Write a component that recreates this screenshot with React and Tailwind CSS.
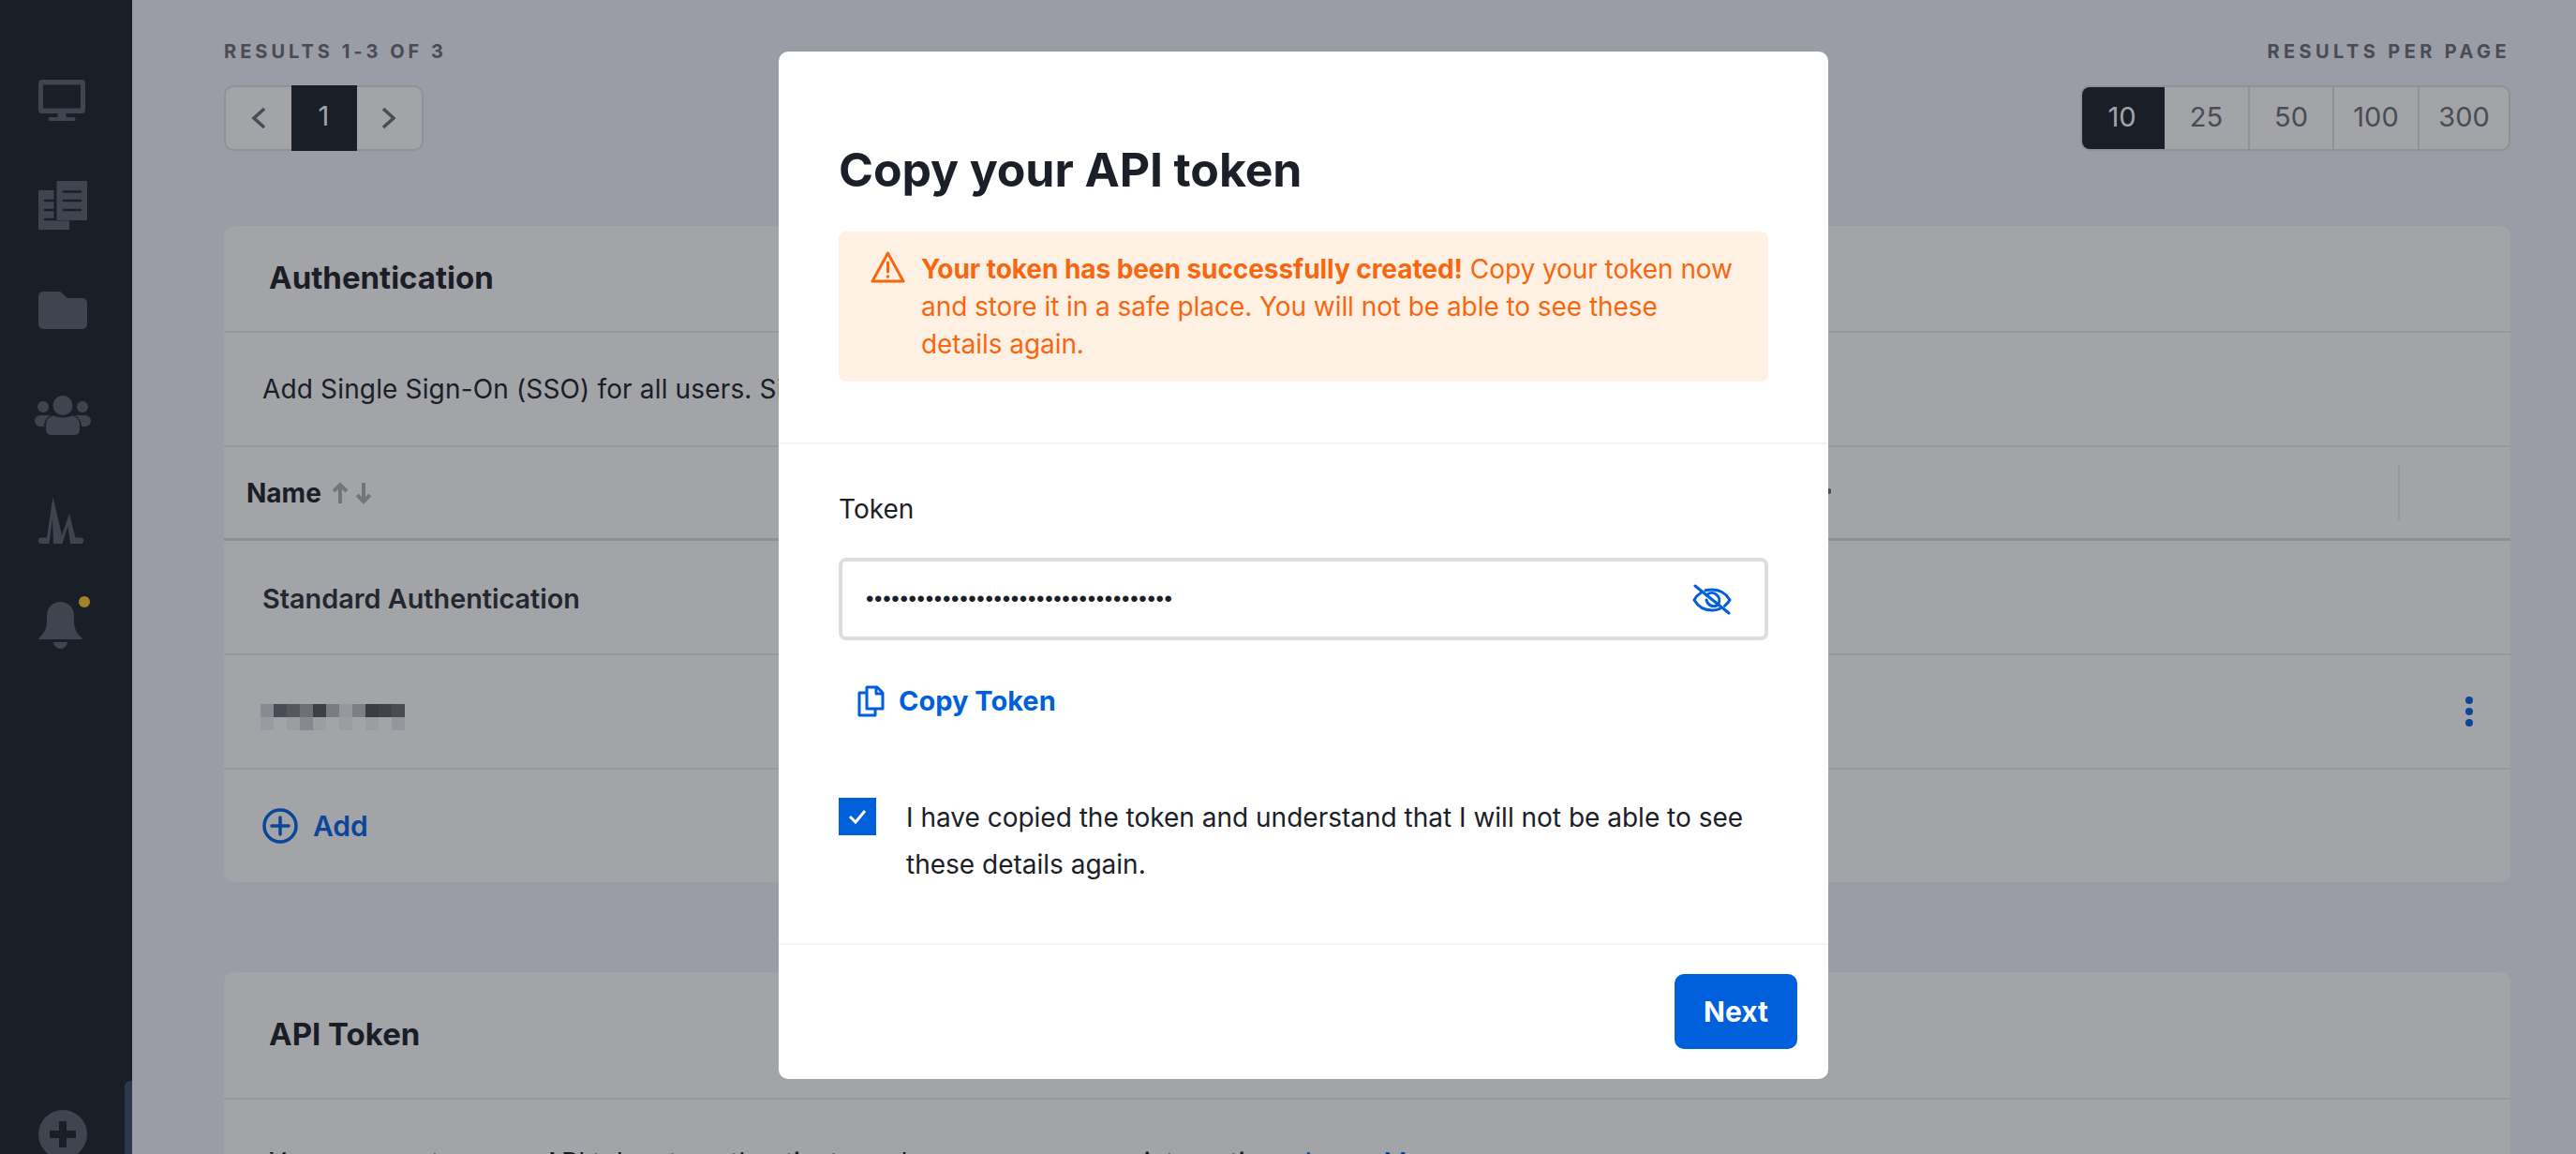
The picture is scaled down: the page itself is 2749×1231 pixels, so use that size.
import React from "react";

const dots = "•".repeat(36);

const pixelsTop = ["bg-[#d5d5d8]","bg-[#6b6c73]","bg-[#7f8086]","bg-[#a8a9ad]","bg-[#58595f]","bg-[#bbbcbe]","bg-[#ebebed]","bg-[#c0c1c4]","bg-[#505158]","bg-[#5a5b61]","bg-[#6b6c72]"];
const pixelsBottom = ["bg-[#f1f1f2]","bg-white","bg-[#f3f3f4]","bg-[#d2d2d5]","bg-[#f3f3f4]","bg-white","bg-[#f3f3f4]","bg-white","bg-[#f3f3f4]","bg-white","bg-[#e9e9eb]"];

function Monitor() {
  return (
    <svg width="50" height="44" viewBox="0 0 50 44" fill="#5a5f6b">
      <path fillRule="evenodd" d="M4 0h42a4 4 0 0 1 4 4v28a4 4 0 0 1-4 4H4a4 4 0 0 1-4-4V4a4 4 0 0 1 4-4Zm1 5.500v25h40v-25H5Z" />
      <path d="M21 36h8l1 4h7.500a2 2 0 0 1 0 4h-25a2 2 0 0 1 0-4H20l1-4Z" />
    </svg>
  );
}

function Docs() {
  return (
    <svg width="52" height="52" viewBox="0 0 52 52" fill="#5a5f6b">
      <path d="M0 10h16.500v32.500H33V52H0V10Z" />
      <path d="M19.500 0H52v42H19.500V0Z" />
      <g stroke="#1b2028" strokeWidth="2.500" strokeLinecap="round">
        <path d="M27 11.500h18M27 21h18M27 31h18" />
        <path d="M7 21h9M7 31h9M7 41h9" />
      </g>
    </svg>
  );
}

function Folder() {
  return (
    <svg width="52" height="40" viewBox="0 0 52 40" fill="#5a5f6b">
      <path d="M5 0h17a4 4 0 0 1 2.800 1.200L31 7h16a5 5 0 0 1 5 5v23a5 5 0 0 1-5 5H5a5 5 0 0 1-5-5V5a5 5 0 0 1 5-5Z" />
    </svg>
  );
}

function Users() {
  return (
    <svg width="60" height="42" viewBox="0 0 60 42" fill="#5a5f6b">
      <circle cx="30" cy="10.500" r="10.500" />
      <circle cx="9" cy="12" r="6" />
      <circle cx="51" cy="12" r="6" />
      <path d="M12 31c0-5 3-8.500 8-9.500 3 1.200 6 1.800 10 1.800s7-.6 10-1.800c5 1 8 4.500 8 9.500v6a5 5 0 0 1-5 5H17a5 5 0 0 1-5-5V31Z" />
      <path d="M6 21h9c1 0 1.500.1 2 .3-4 2-6.500 5.500-7 11.700H6a6 6 0 0 1-6-6 6 6 0 0 1 6-6Z" />
      <path d="M54 21h-9c-1 0-1.500.1-2 .3 4 2 6.500 5.500 7 11.700h4a6 6 0 0 0 6-6 6 6 0 0 0-6-6Z" />
    </svg>
  );
}

function Activity() {
  return (
    <svg width="50" height="50" viewBox="0 0 50 50" fill="#5a5f6b">
      <path d="M15.500 0 25 41l8-23 6.500 25.500H45a3 3 0 0 1 0 6.500h-11l-2.500-19-6 19h-9.500l-1-27.500L11.500 50H3a3 3 0 0 1 0-6.500h6L15.500 0Z" />
    </svg>
  );
}

function Bell() {
  return (
    <svg width="47" height="50" viewBox="0 0 47 50" fill="#5a5f6b">
      <path d="M23.500 0C32 0 38 6.500 38 15v6c0 7 3 13 8.500 17.500.6.700.3 1.500-.6 1.500H1.100C.2 40-.1 39.200.5 38.500 6 34 9 28 9 21v-6C9 6.500 15 0 23.500 0Z" />
      <path d="M16 43h15c-.5 4-3.500 7-7.500 7S16.500 47 16 43Z" />
    </svg>
  );
}

function Plus() {
  return (
    <svg width="52" height="52" viewBox="0 0 52 52">
      <circle cx="26" cy="26" r="26" fill="#5a5f6b" />
      <path d="M22 12h8v10h10v8H30v10h-8V30H12v-8h10V12Z" fill="#1b2028" />
    </svg>
  );
}

function Warning() {
  return (
    <svg width="37" height="34" viewBox="0 0 37 34" fill="none" stroke="#f7670f" strokeWidth="3" strokeLinejoin="round">
      <path d="M18.500 2 35 32H2L18.500 2Z" />
      <path d="M18.500 12v10" strokeLinecap="round" />
      <circle cx="18.500" cy="27" r="1" fill="#f7670f" strokeWidth="1.500" />
    </svg>
  );
}

function EyeOff() {
  return (
    <svg width="42" height="33" viewBox="0 0 42 33" fill="none" stroke="#005fdb" strokeWidth="3" strokeLinecap="round">
      <path d="M9 9.500C5.500 11.500 3.500 14 2 17c4 7 11 11 19 11 3 0 5.800-.6 8.400-1.600M14 6.800C16.200 6.300 18.500 6 21 6c8 0 15 4 19 11-1.400 2.500-3.300 4.600-5.500 6.400" />
      <path d="M15 12a8 8 0 0 1 13 9M26 23a8 8 0 0 1-11-6" />
      <path d="M3 2l36 29" />
    </svg>
  );
}

function CopyIcon() {
  return (
    <svg width="29" height="34" viewBox="0 0 29 34" fill="none" stroke="#005fdb" strokeWidth="3" strokeLinejoin="round">
      <path d="M10 2h11l6 6v17H10V2Z" />
      <path d="M20 2v7h7" />
      <path d="M10 8H2v24h17v-7" />
    </svg>
  );
}

function Card({ children, className }) {
  return <section className={`bg-white rounded-[10px] ${className}`}>{children}</section>;
}

export default function App() {
  return (
    <div className="relative flex h-screen overflow-hidden bg-[#f0f3fa] text-[#1b2028] font-[Inter,sans-serif]">
      <aside className="relative w-[141px] shrink-0 bg-[#1b2028] flex flex-col pt-[51px] pl-[41px]">
        <div className="h-[112px] flex items-center"><Monitor /></div>
        <div className="h-[112px] flex items-center"><Docs /></div>
        <div className="h-[112px] flex items-center"><Folder /></div>
        <div className="h-[112px] flex items-center -ml-[4px]"><Users /></div>
        <div className="h-[112px] flex items-center"><Activity /></div>
        <div className="relative h-[112px] flex items-center">
          <Bell />
          <span className="absolute left-[43px] top-[25px] w-[12px] h-[12px] rounded-full bg-[#ffc72e]" />
        </div>
        <div className="mt-auto -mb-[5px]"><Plus /></div>
        <div className="absolute right-0 bottom-0 w-[8px] h-[78px] rounded-tl-[6px] bg-[#3a4c68]" />
      </aside>

      <main className="flex-1 min-w-0 pl-[98px] pr-[70px] pt-[45px]">
        <div className="flex justify-between">
          <div>
            <div className="h-[21px] leading-[21px] text-[20px] font-bold tracking-[4px] text-[#6b6c73]">RESULTS 1-3 OF 3</div>
            <div className="mt-[25px] flex h-[70px] w-[213px] rounded-[10px] border-2 border-[#dedfe2] bg-white">
              <div className="flex-1 flex items-center justify-center text-[#6b6c73]">
                <svg width="16" height="24" viewBox="0 0 16 24" fill="none" stroke="currentColor" strokeWidth="3.500"><path d="M14 2 3 12l11 10" /></svg>
              </div>
              <div className="w-[70px] -my-[2px] bg-[#1b2028] text-white flex items-center justify-center text-[29px] leading-none pb-[6px]">1</div>
              <div className="flex-1 flex items-center justify-center text-[#6b6c73]">
                <svg width="16" height="24" viewBox="0 0 16 24" fill="none" stroke="currentColor" strokeWidth="3.500"><path d="M2 2l11 10L2 22" /></svg>
              </div>
            </div>
          </div>
          <div className="flex flex-col items-end">
            <div className="h-[21px] leading-[21px] text-[20px] font-bold tracking-[4.400px] text-[#6b6c73]">RESULTS PER PAGE</div>
            <div className="mt-[25px] flex h-[70px] rounded-[10px] border-2 border-[#dedfe2] bg-white text-[29px] text-[#6b6c73]">
              <div className="w-[88px] rounded-l-[8px] bg-[#1b2028] text-white flex items-center justify-center pb-[3px] pr-[3px]">10</div>
              <div className="w-[91px] border-r-2 border-[#dedfe2] flex items-center justify-center pb-[3px]">25</div>
              <div className="w-[90px] border-r-2 border-[#dedfe2] flex items-center justify-center pb-[3px]">50</div>
              <div className="w-[91px] border-r-2 border-[#dedfe2] flex items-center justify-center pb-[3px]">100</div>
              <div className="w-[95px] flex items-center justify-center pb-[3px]">300</div>
            </div>
          </div>
        </div>

        <Card className="mt-[80px]">
          <div className="h-[114px] pl-[48px] flex items-center border-b-2 border-[#ebecee] text-[33px] font-bold">Authentication</div>
          <div className="h-[122px] pl-[41px] flex items-center border-b-2 border-[#ebecee] text-[28px] tracking-[0.15px] whitespace-nowrap">Add Single Sign-On (SSO) for all users. Single Sign-On lets your team log in with one account.</div>
          <div className="relative h-[100px] pl-[24px] flex items-center border-b-[3px] border-[#dcdde0] text-[28px] font-bold">
            <span>Name</span>
            <span className="ml-[10px] flex text-[#b0b1b5]">
              <svg width="20" height="24" viewBox="0 0 20 24" fill="none" stroke="currentColor" strokeWidth="4"><path d="M10 23V3M3 10l7-7 7 7" /></svg>
              <svg className="ml-[5px]" width="20" height="24" viewBox="0 0 20 24" fill="none" stroke="currentColor" strokeWidth="4"><path d="M10 1v20M3 14l7 7 7-7" /></svg>
            </span>
            <span className="absolute left-[1711px] top-[44px] w-[4px] h-[6px] rounded-full bg-[#6b6c73]" />
            <span className="ml-auto mr-[118px] h-[58px] border-l-2 border-[#ebecee]" />
          </div>
          <div className="h-[122px] pl-[41px] pt-[4px] flex items-center border-b-2 border-[#ebecee] text-[28.800px] font-semibold text-[#2a2f38]">Standard Authentication</div>
          <div className="h-[122px] pl-[39px] pr-[40px] flex items-center justify-between border-b-2 border-[#ebecee]">
            <div className="mt-[12px] grid grid-cols-[repeat(11,14px)] grid-rows-[14px_14px]">
              {pixelsTop.map((c, i) => <span key={i} className={c} />)}
              {pixelsBottom.map((c, i) => <span key={i} className={c} />)}
            </div>
            <div className="flex flex-col gap-[4px]">
              <span className="w-[8px] h-[8px] rounded-full bg-[#0063e6]" />
              <span className="w-[8px] h-[8px] rounded-full bg-[#0063e6]" />
              <span className="w-[8px] h-[8px] rounded-full bg-[#0063e6]" />
            </div>
          </div>
          <div className="h-[120px] pl-[41px] flex items-center gap-[16px] text-[#0063e6] text-[30px] font-semibold">
            <svg width="38" height="38" viewBox="0 0 38 38" fill="none" stroke="currentColor" strokeWidth="3.500" strokeLinecap="round"><circle cx="19" cy="19" r="17" /><path d="M19 10v18M10 19h18" /></svg>
            <span>Add</span>
          </div>
        </Card>

        <Card className="mt-[96px]">
          <div className="h-[136px] pl-[48px] flex items-center border-b-2 border-[#ebecee] text-[33px] font-bold">API Token</div>
          <div className="pt-[46px] pl-[48px] text-[28px] whitespace-nowrap">You can create a new API token to authenticate and manage your own integrations. <span className="text-[#0063e6]">Learn More</span></div>
        </Card>
      </main>

      <div className="absolute inset-0 bg-[#191c26]/40" />

      <div className="absolute left-[831px] top-[55px] w-[1120px] h-[1096px] rounded-[10px] bg-white text-[#1b2028] flex flex-col">
        <div className="px-[64px] pt-[96px] pb-[65px] border-b-2 border-[#f3f3f5]">
          <h1 className="text-[50px] leading-[60px] font-bold tracking-[-0.1px]">Copy your API token</h1>
          <div className="mt-[36px] h-[160px] rounded-[8px] bg-[#fff0e4] flex pl-[34px] pt-[20px] text-[#f7670f] text-[28px] leading-[40px] tracking-[-0.06px]">
            <div className="w-[54px] shrink-0 pt-[1px]"><Warning /></div>
            <p><strong className="font-bold">Your token has been successfully created!</strong> Copy your token now<br />and store it in a safe place. You will not be able to see these<br />details again.</p>
          </div>
        </div>
        <div className="flex-1 px-[64px] pt-[49px]">
          <div className="text-[28px] leading-[40px]">Token</div>
          <div className="mt-[32px] h-[88px] rounded-[8px] border-4 border-[#dddddd] flex items-center justify-between pl-[25px] pr-[35px]">
            <span className="font-['Liberation_Sans',sans-serif] text-[24px] leading-none tracking-[0.7px]">{dots}</span>
            <EyeOff />
          </div>
          <div className="mt-[45px] h-[40px] ml-[20px] flex items-center gap-[15px] text-[#005fdb] text-[29px] font-bold">
            <CopyIcon />
            <span>Copy Token</span>
          </div>
          <div className="mt-[79px] flex">
            <span className="mt-[4px] w-[40px] h-[40px] bg-[#005fdb] flex items-center justify-center">
              <svg width="20" height="16" viewBox="0 0 20 16" fill="none" stroke="white" strokeWidth="3"><path d="M2 8l6 6L18 2" /></svg>
            </span>
            <p className="ml-[32px] text-[28px] leading-[50px]">I have copied the token and understand that I will not be able to see<br />these details again.</p>
          </div>
        </div>
        <div className="h-[145px] border-t-2 border-[#f3f3f5] flex justify-end items-start pt-[31px] pr-[33px]">
          <button className="w-[131px] h-[80px] rounded-[10px] bg-[#005fdb] text-white text-[30px] font-bold">Next</button>
        </div>
      </div>
    </div>
  );
}
